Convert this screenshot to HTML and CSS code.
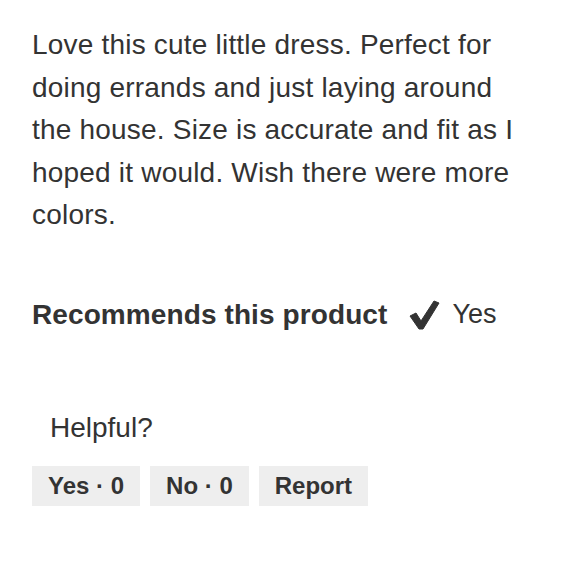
FILE: index.html
```html
<!DOCTYPE html>
<html>
<head>
<meta charset="utf-8">
<link rel="stylesheet" href="styles.css">
</head>
<body>
<div class="review">
  <p class="body-text">Love this cute little dress. Perfect for doing errands and just laying around the house. Size is accurate and fit as I hoped it would. Wish there were more colors.</p>
  <div class="recommend">
    <span class="rec-label">Recommends this product</span>
    <svg class="check" width="32" height="30" viewBox="0 0 32 30"><path d="M2 16 L8 13 L13 21 L26 1 L31 3 L15 29 L11 29 Z" fill="#333" stroke="#333" stroke-width="1" stroke-linejoin="round"/></svg>
    <span class="rec-value">Yes</span>
  </div>
  <div class="helpful">
    <div class="helpful-title">Helpful?</div>
    <div class="buttons">
      <span class="btn">Yes · 0</span>
      <span class="btn">No · 0</span>
      <span class="btn">Report</span>
    </div>
  </div>
</div>
</body>
</html>
```
FILE: styles.css
```css
html, body { margin: 0; padding: 0; background: #fff; }
body { font-family: "Liberation Sans", Arial, sans-serif; color: #333; }
.review { padding: 24px 32px 0 32px; }
.body-text { margin: 0; font-size: 28px; letter-spacing: 0.2px; line-height: 42.5px; width: 492px; }
.recommend { display: flex; align-items: center; margin-top: 58px; height: 40px; }
.rec-label { font-weight: bold; font-size: 28px; letter-spacing: 0.1px; }
.check { margin-left: 21px; margin-right: 12px; }
.rec-value { font-size: 27px; }
.helpful { margin-top: 73px; }
.helpful-title { font-size: 28px; padding-left: 18px; height: 40px; line-height: 40px; }
.buttons { display: flex; gap: 10px; margin-top: 18px; }
.btn { background: #eeeeee; font-weight: bold; font-size: 24px; height: 40px; line-height: 40px; padding: 0 16px; }
```
